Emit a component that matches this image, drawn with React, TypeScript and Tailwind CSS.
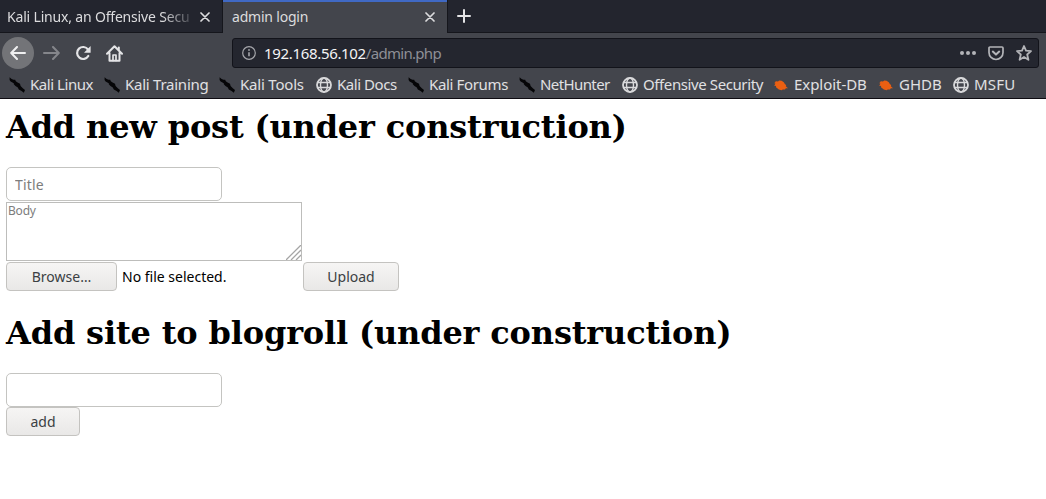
import React from "react";

function KaliIcon() {
  return (
    <svg width="16" height="16" viewBox="0 0 16 16" className="shrink-0">
      <path d="M.6.200 2.600 2 4.600 2.800 6.200 2.800 6.800 4.200 8.600 5.400 11 6.800 11.600 9 13.800 11.200 16 13 14.800 15.800 12.600 14 9.800 12.400 8.800 10.400 6.500 9 4.800 7.200 4.800 6.200 1.600 4.600.600 3Z" fill="#050507" />
    </svg>
  );
}

function GlobeIcon() {
  return (
    <svg width="16" height="16" viewBox="0 0 16 16" className="shrink-0" fill="none" stroke="#d8d8da">
      <circle cx="8" cy="8" r="7" strokeWidth="1.800" />
      <ellipse cx="8" cy="8" rx="3.500" ry="7" strokeWidth="1.400" />
      <path d="M1.500 5.500h13M1.500 10.500h13" strokeWidth="1.400" />
    </svg>
  );
}

function BugIcon() {
  return (
    <svg width="16" height="16" viewBox="0 0 16 16" className="shrink-0">
      <path d="M1.500 5.200 3.200 4.200 5 4.600 6.200 3.600 8.600 3.800 10.800 5.200 12 7.200 13.200 8 12.800 9.200 15 11.200 12.800 11.200 12 12.600 9.800 12.600 8.600 13.200 5.800 12.400 4.600 11.400 3.200 10.600 3 9 1 8.600 2.200 7.400 1.400 6.600 2.600 6.200Z" fill="#ea5f12" />
    </svg>
  );
}

function CloseIcon() {
  return (
    <svg width="10" height="10" viewBox="0 0 10 10" className="shrink-0" stroke="#dcdcde" strokeWidth="1.700" strokeLinecap="round">
      <path d="m1 1 8 8M9 1 1 9" />
    </svg>
  );
}

const bookmarks = [
  { label: "Kali Linux", icon: "kali", box: "w-[95px]", text: "tracking-[-0.45px]" },
  { label: "Kali Training", icon: "kali", box: "w-[115px]", text: "tracking-[-0.25px]" },
  { label: "Kali Tools", icon: "kali", box: "w-[97px]", text: "tracking-[-0.2px]" },
  { label: "Kali Docs", icon: "globe", box: "w-[92px]", text: "tracking-[-0.45px]" },
  { label: "Kali Forums", icon: "kali", box: "w-[111px]", text: "tracking-[-0.35px]" },
  { label: "NetHunter", icon: "kali", box: "w-[103px]", text: "tracking-[-0.6px]" },
  { label: "Offensive Security", icon: "globe", box: "w-[151px]", text: "tracking-[-0.4px]" },
  { label: "Exploit-DB", icon: "bug", box: "w-[105px]", text: "tracking-[-0.05px]" },
  { label: "GHDB", icon: "bug", box: "w-[75px]", text: "tracking-[0px]" },
  { label: "MSFU", icon: "globe", box: "w-[80px]", text: "tracking-[0.2px]" },
];

function Tabs() {
  return (
    <div className="flex h-[33px] bg-[#23252e] text-[14px] leading-[30px] text-[#dcdcde]">
      <div className="flex w-[223px] items-center border-r border-b border-[#15161c] pt-[2px] pl-[7px]">
        <div className="w-[188px] overflow-hidden whitespace-nowrap tracking-[-0.18px] [mask-image:linear-gradient(to_right,black_155px,transparent_190px)]">
          Kali Linux, an Offensive Secu
        </div>
        <div className="ml-[5px]"><CloseIcon /></div>
      </div>
      <div className="flex w-[224px] items-center border-t-2 border-[#4069c4] bg-[#43454c] pr-[12px] pb-px pl-[9px]">
        <span className="flex-1 tracking-[-0.2px]">admin login</span>
        <CloseIcon />
      </div>
      <div className="flex flex-1 items-center border-b border-l border-[#15161c] pl-[9px]">
        <svg width="14" height="14" viewBox="0 0 14 14" stroke="#e4e4e6" strokeWidth="2" strokeLinecap="round">
          <path d="M7 1v12M1 7h12" />
        </svg>
      </div>
    </div>
  );
}

function Toolbar() {
  return (
    <div className="flex h-[40px] items-center bg-[#43454c] pl-[2px]">
      <div className="flex size-[32px] items-center justify-center rounded-full bg-[#737478]">
        <svg width="16" height="14" viewBox="0 0 16 14" fill="none" stroke="#f0f0f1" strokeWidth="2" strokeLinecap="round" strokeLinejoin="round">
          <path d="M15 7H1.500M7 1 1.200 7 7 13" />
        </svg>
      </div>
      <svg width="17" height="14" viewBox="0 0 17 14" className="ml-[9px]" fill="none" stroke="#85868b" strokeWidth="2" strokeLinecap="round" strokeLinejoin="round">
        <path d="M1 7h14.500M10 1l5.800 6L10 13" />
      </svg>
      <svg width="16" height="16" viewBox="0 0 16 16" className="ml-[15px]" fill="none" stroke="#e4e4e6" strokeWidth="2.200">
        <path d="M13 4.500A6 6 0 1 0 13.300 11" strokeLinecap="round" />
        <path d="M15.600 1v6.800H9Z" fill="#e4e4e6" stroke="none" />
      </svg>
      <svg width="17" height="17" viewBox="0 0 17 17" className="ml-[15px]" fill="none" stroke="#e4e4e6" strokeWidth="2" strokeLinejoin="round" strokeLinecap="round">
        <path d="M1 8.800 8.500 1.300 16 8.800M3.500 8v7.700h10V8" />
        <path d="M7 15.500V10h3v5.500" strokeWidth="1.700" />
        <path d="M12.800 2.500v2" />
      </svg>
      <div className="ml-[109px] flex h-[30px] w-[807px] items-center rounded-[3px] border border-[#12131a] bg-[#24262f] pr-[6px] pl-[9px] text-[15px]">
        <svg width="14" height="14" viewBox="0 0 14 14" fill="none" stroke="#a5a6ab">
          <circle cx="7" cy="7" r="6.300" strokeWidth="1.200" />
          <path d="M7 6.200v4" strokeWidth="1.600" />
          <circle cx="7" cy="4" r=".9" fill="#a5a6ab" stroke="none" />
        </svg>
        <span className="ml-[8px] flex-1 whitespace-nowrap text-[#8e8f96]">
          <span className="tracking-[-0.33px] text-[#f4f4f5]">192.168.56.102</span>
          <span className="tracking-[-0.7px]">/admin.php</span>
        </span>
        <svg width="16" height="4" viewBox="0 0 16 4" fill="#b3b4b8">
          <circle cx="2" cy="2" r="2" /><circle cx="8" cy="2" r="2" /><circle cx="14" cy="2" r="2" />
        </svg>
        <svg width="16" height="15" viewBox="0 0 16 15" className="ml-[12px]" fill="none" stroke="#b3b4b8" strokeWidth="2" strokeLinecap="round" strokeLinejoin="round">
          <path d="M2 1h12q1 0 1 1v4.500a7 7 0 0 1-14 0V2q0-1 1-1Z" strokeWidth="1.700" />
          <path d="m4.800 5.600 3.200 3 3.200-3" />
        </svg>
        <svg width="16" height="16" viewBox="0 0 16 16" className="ml-[12px]" fill="none" stroke="#b3b4b8" strokeWidth="1.800" strokeLinejoin="round">
          <path d="m8 1 2 4.700 5 .4-3.800 3.400 1.200 5.300L8 12l-4.400 2.800 1.200-5.300L1 6.100l5-.4Z" />
        </svg>
      </div>
    </div>
  );
}

function Bookmarks() {
  return (
    <div className="flex h-[26px] border-b border-[#0e0c12] bg-[#43454c] pt-px pl-[9px] text-[15px] text-[#e0e0e2]">
      {bookmarks.map((b) => (
        <div key={b.label} className={`flex h-[22px] shrink-0 items-center whitespace-nowrap ${b.box}`}>
          {b.icon === "kali" ? <KaliIcon /> : b.icon === "globe" ? <GlobeIcon /> : <BugIcon />}
          <span className={`mb-[2px] ml-[5px] ${b.text}`}>{b.label}</span>
        </div>
      ))}
    </div>
  );
}

export default function App() {
  return (
    <div className="h-[499px] w-[1046px] overflow-hidden bg-white font-['Noto_Sans',sans-serif]">
      <Tabs />
      <Toolbar />
      <Bookmarks />
      <main className="flex flex-col items-start pl-[6px] text-[14px] text-black">
        <h1 className="mt-[9px] font-['DejaVu_Serif',serif] text-[32px] leading-[38px] font-bold tracking-[-0.17px] whitespace-nowrap">
          Add new post (under construction)
        </h1>
        <input placeholder="Title" className="mt-[21px] h-[34px] w-[216px] rounded-[5px] border border-[#c4c4c1] px-[8px] text-[14px] tracking-[0.15px] placeholder:text-[#7d7d7d]" />
        <div className="relative mt-px h-[59px] w-[296px]">
          <textarea placeholder="Body" className="block h-[59px] w-[296px] resize-none border border-[#bdbdbb] px-px pt-0 text-[12px] leading-[16px] tracking-[-0.2px] placeholder:text-[#7d7d7d]" />
          <svg width="15" height="15" viewBox="0 0 15 15" className="absolute right-px bottom-px" stroke="#a5a5a5" strokeWidth="1.300">
            <path d="M0 15 15 0M5 15 15 5M10 15 15 10" />
          </svg>
        </div>
        <div className="mt-px flex h-[29px] items-center">
          <button className="h-[29px] w-[111px] rounded-[4px] border border-[#c4c3c0] bg-linear-to-b from-[#f6f5f4] to-[#e9e8e7] text-[#3b4043]">Browse…</button>
          <span className="ml-[5px] w-[181px] whitespace-nowrap">No file selected.</span>
          <button className="h-[29px] w-[96px] rounded-[4px] border border-[#c4c3c0] bg-linear-to-b from-[#f6f5f4] to-[#e9e8e7] text-[#3b4043]">Upload</button>
        </div>
        <h1 className="mt-[23px] font-['DejaVu_Serif',serif] text-[32px] leading-[38px] font-bold tracking-[-0.16px] whitespace-nowrap">
          Add site to blogroll (under construction)
        </h1>
        <input aria-label="Site" className="mt-[21px] h-[34px] w-[216px] rounded-[5px] border border-[#c4c4c1] px-[8px]" />
        <button className="h-[29px] w-[74px] rounded-[4px] border border-[#c4c3c0] bg-linear-to-b from-[#f6f5f4] to-[#e9e8e7] text-[#3b4043]">add</button>
      </main>
    </div>
  );
}
